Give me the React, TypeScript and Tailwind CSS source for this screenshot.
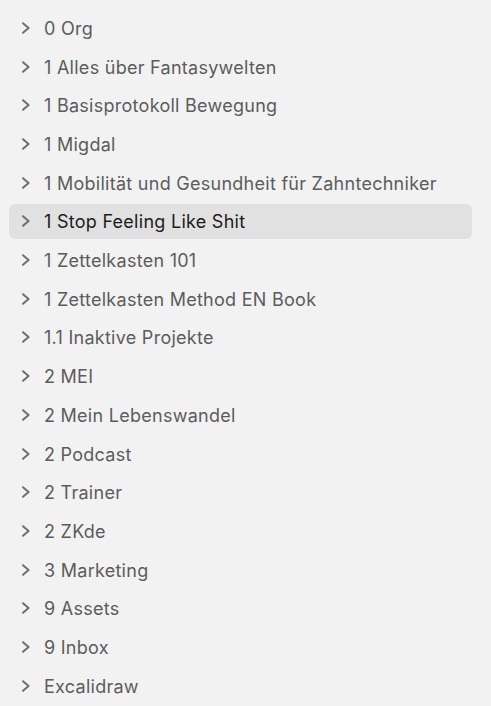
const folders = [
  '0 Org',
  '1 Alles über Fantasywelten',
  '1 Basisprotokoll Bewegung',
  '1 Migdal',
  '1 Mobilität und Gesundheit für Zahntechniker',
  '1 Stop Feeling Like Shit',
  '1 Zettelkasten 101',
  '1 Zettelkasten Method EN Book',
  '1.1 Inaktive Projekte',
  '2 MEI',
  '2 Mein Lebenswandel',
  '2 Podcast',
  '2 Trainer',
  '2 ZKde',
  '3 Marketing',
  '9 Assets',
  '9 Inbox',
  'Excalidraw',
];

function Chevron() {
  return (
    <svg width="10" height="14" viewBox="0 0 10 14" className="ml-[12px] shrink-0 text-[#6e6e6e]">
      <polyline
        points="2,2.2 7.6,7 2,11.8"
        fill="none"
        stroke="currentColor"
        strokeWidth="2"
        strokeLinecap="round"
        strokeLinejoin="round"
      />
    </svg>
  );
}

export default function App() {
  const selected = '1 Stop Feeling Like Shit';

  return (
    <div className="h-[706px] w-[491px] overflow-hidden bg-[#f2f2f2] pt-[8.6px] font-['Inter',sans-serif]">
      <ul>
        {folders.map((name) => {
          const isSelected = name === selected;
          return (
            <li key={name} className="flex h-[38.7px] items-center">
              <div
                className={`ml-[9px] mr-[19px] flex h-[35.5px] flex-1 items-center rounded-md ${
                  isSelected ? 'bg-[#e1e1e1]' : ''
                }`}
              >
                <Chevron />
                <span
                  className={`ml-[13px] pt-[2px] text-[18px] leading-none tracking-[0.27px] ${
                    isSelected ? 'text-[#1c1c1c]' : 'text-[#5c5c5c]'
                  }`}
                >
                  {name}
                </span>
              </div>
            </li>
          );
        })}
      </ul>
    </div>
  );
}
